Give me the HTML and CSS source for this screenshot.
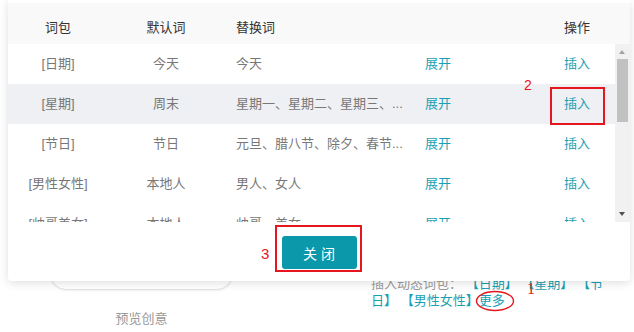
FILE: index.html
```html
<!DOCTYPE html>
<html lang="zh-CN">
<head>
<meta charset="utf-8">
<title>词包</title>
<link rel="stylesheet" href="styles.css">
</head>
<body>
<div class="page">
  <div class="left-col">
    <div class="preview-box"></div>
    <div class="caption">预览创意</div>
  </div>
  <div class="right-col">
    <p class="insert">插入动态词包： <a class="lnk">【日期】</a> <a class="lnk">【星期】</a> <a class="lnk">【节日】</a> <a class="lnk">【男性女性】</a><a class="lnk">更多</a></p>
  </div>
</div>

<div class="popover">
  <div class="caret"></div>
  <div class="thead">
    <div class="c1">词包</div>
    <div class="c2">默认词</div>
    <div class="c3">替换词</div>
    <div class="c4"></div>
    <div class="c5">操作</div>
  </div>
  <div class="tbody">
    <div class="rows">
      <div class="row">
        <div class="c1">[日期]</div><div class="c2">今天</div><div class="c3">今天</div><div class="c4 lnk">展开</div><div class="c5 lnk">插入</div>
      </div>
      <div class="row hover">
        <div class="c1">[星期]</div><div class="c2">周末</div><div class="c3">星期一、星期二、星期三、...</div><div class="c4 lnk">展开</div><div class="c5 lnk">插入</div>
      </div>
      <div class="row">
        <div class="c1">[节日]</div><div class="c2">节日</div><div class="c3">元旦、腊八节、除夕、春节...</div><div class="c4 lnk">展开</div><div class="c5 lnk">插入</div>
      </div>
      <div class="row">
        <div class="c1">[男性女性]</div><div class="c2">本地人</div><div class="c3">男人、女人</div><div class="c4 lnk">展开</div><div class="c5 lnk">插入</div>
      </div>
      <div class="row">
        <div class="c1">[帅哥美女]</div><div class="c2">本地人</div><div class="c3">帅哥、美女</div><div class="c4 lnk">展开</div><div class="c5 lnk">插入</div>
      </div>
    </div>
    <div class="scrollbar">
      <div class="sb-up"></div>
      <div class="sb-track"><div class="sb-thumb"></div></div>
      <div class="sb-down"></div>
    </div>
  </div>
  <div class="tfoot">
    <button class="btn-close">关闭</button>
  </div>
</div>

<div class="mark box-insert"></div>
<div class="mark box-close"></div>
<div class="num n2">2</div>
<div class="num n3">3</div>
<div class="num n1">1</div>
<svg class="ellipse" width="40" height="22" viewBox="0 0 40 22"><ellipse cx="20" cy="11" rx="18.5" ry="9.5" fill="none" stroke="#e6161e" stroke-width="1.4"/></svg>
</body>
</html>
```

FILE: styles.css
```css
* { box-sizing: border-box; }
html, body { margin: 0; padding: 0; background: #fff; }
body {
  width: 634px;
  height: 332px;
  overflow: hidden;
  position: relative;
  font-family: "Liberation Sans", "Noto Sans CJK SC", sans-serif;
  font-size: 13px;
  color: #777;
}

/* underlying page */
.page {
  display: flex;
  padding: 234px 0 0 50px;
}
.left-col { width: 183px; display: flex; flex-direction: column; align-items: center; }
.preview-box {
  width: 183px;
  height: 56px;
  border: 1px solid #e2e2e2;
  border-radius: 16px;
  box-shadow: 0 1px 2px rgba(0,0,0,0.06);
}
.caption { margin-top: 20px; line-height: 18px; color: #999; }
.right-col { margin-left: 138px; width: 240px; }
.insert { margin: 41px 0 0; line-height: 17px; color: #999; }
.lnk { color: #1a9fb3; text-decoration: none; }

/* popover */
.popover {
  position: absolute;
  left: 8px;
  top: 0;
  width: 622px;
  height: 281px;
  background: #fff;
  padding-top: 3px;
  border-radius: 0 0 4px 4px;
  box-shadow: 0 2px 10px rgba(0,0,0,0.13);
  display: flex;
  flex-direction: column;
}
.caret {
  position: absolute;
  left: 306px;
  bottom: -5px;
  width: 10px;
  height: 10px;
  background: #fff;
  transform: rotate(45deg);
  box-shadow: 1px 1px 4px rgba(0,0,0,0.12);
  z-index: -1;
}
.thead, .row {
  display: grid;
  grid-template-columns: 100px 116px 189px 126px 76px;
  white-space: nowrap;
}
.thead {
  height: 41px;
  background: #f9f9f9;
  align-items: end;
  padding-bottom: 6px;
  line-height: 20px;
  color: #333;
  width: 622px;
}
.c1, .c2, .c5 { text-align: center; }
.c3, .c4 { padding-left: 12px; overflow: hidden; }
.tbody { display: flex; height: 178px; }
.rows { flex: 1; overflow: hidden; }
.row { height: 40px; align-items: center; line-height: 20px; }
.row.hover { background: #eef0f3; }

.scrollbar {
  width: 15px;
  background: #f1f1f1;
  display: flex;
  flex-direction: column;
  align-items: center;
}
.sb-up, .sb-down { height: 15px; width: 15px; position: relative; }
.sb-up::after, .sb-down::after {
  content: "";
  position: absolute;
  left: 4px;
  width: 0; height: 0;
  border-left: 3.5px solid transparent;
  border-right: 3.5px solid transparent;
}
.sb-up::after { top: 6px; border-bottom: 4px solid #a3a3a3; }
.sb-down::after { top: 5px; border-top: 4px solid #505050; }
.sb-track { flex: 1; width: 15px; padding: 0 2px; }
.sb-thumb { height: 63px; background: #c1c1c1; }

.tfoot { flex: 1; display: flex; justify-content: center; padding-top: 14px; }
.btn-close {
  width: 75px;
  height: 33px;
  border: none;
  border-radius: 3px;
  background: #0b98ab;
  color: #fff;
  font-family: "Liberation Sans", "Noto Sans CJK SC", sans-serif;
  font-size: 14px;
  letter-spacing: 4px;
  text-indent: 4px;
  padding: 0;
}

/* annotations */
.mark { position: absolute; border: 2px solid #e6161e; }
.box-insert { left: 550px; top: 87px; width: 55px; height: 38px; }
.box-close { left: 275px; top: 225px; width: 87px; height: 47px; }
.num { position: absolute; color: #e6161e; line-height: 1; }
.n2 { left: 524px; top: 78px; font-size: 14px; }
.n3 { left: 261px; top: 246px; font-size: 15px; }
.n1 { left: 527px; top: 281px; font-size: 16px; font-family: "Liberation Serif", serif; }
.ellipse { position: absolute; left: 475px; top: 290px; }
```
